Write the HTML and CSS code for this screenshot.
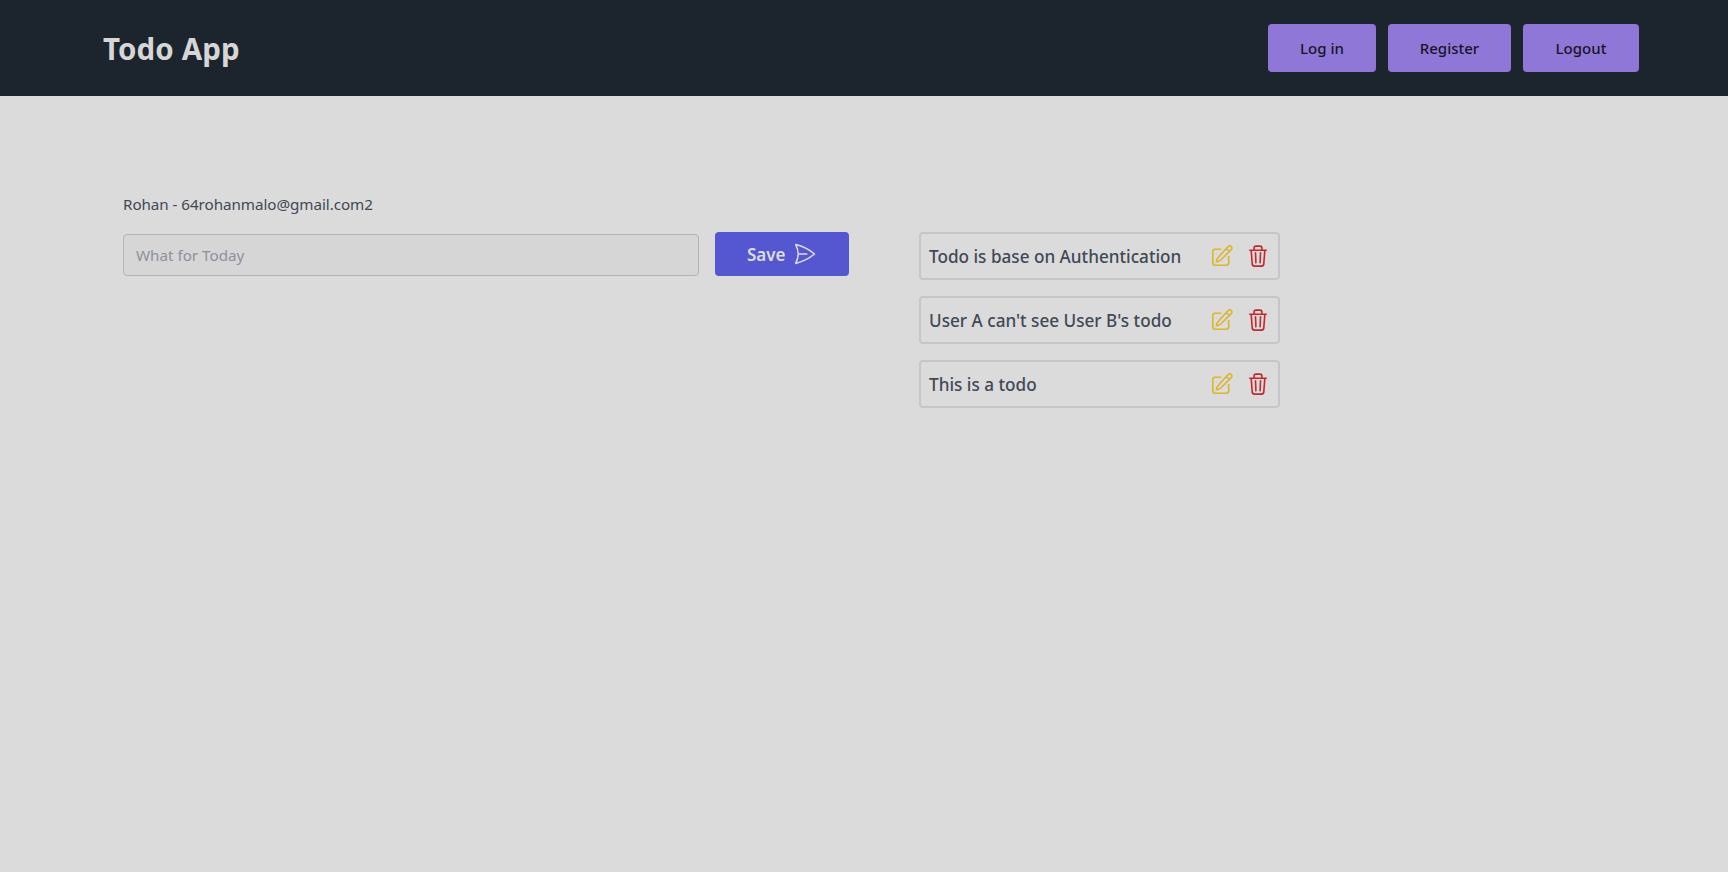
FILE: index.html
```html
<!DOCTYPE html>
<html lang="en">
<head>
<meta charset="utf-8">
<title>Todo App</title>
<link rel="stylesheet" href="styles.css">
</head>
<body>
<svg width="0" height="0" class="sprite" aria-hidden="true">
  <symbol id="edit" viewBox="0 0 22 22">
    <path d="M9.500 4.300H4.200a2.400 2.400 0 0 0-2.400 2.400v11.100a2.400 2.400 0 0 0 2.400 2.400h11.100a2.400 2.400 0 0 0 2.400-2.400V11.500"/>
    <path d="M16.900 1.800c1-1 2.300-1.200 3.300-.2s.8 2.300-.2 3.300L10 14.700c-1.200 1.200-2.500 1.700-4.600 2.100.3-2.100.9-3.500 2-4.600zM15.300 3.500l3 3"/>
  </symbol>
  <symbol id="trash" viewBox="0 0 18 22">
    <path d="M.8 5.200h16.400M2.200 5.400l1 13.500c.1 1.500.9 2.200 2.300 2.200h7c1.400 0 2.200-.7 2.300-2.200l1-13.500M5.100 5V3c0-1.200.7-1.900 1.900-1.900h4c1.200 0 1.900.7 1.900 1.900v2M6.500 7.800l.4 10M11.500 7.800l-.4 10"/>
  </symbol>
  <symbol id="send" viewBox="0 0 22 22">
    <path d="M1.700 1.600C8.800 3.300 15 6.400 20.500 11 15 15.600 8.800 18.700 1.700 20.400 3.500 16.800 4.200 14.300 4.200 11S3.500 5.200 1.700 1.600zM4.200 11h8.600"/>
  </symbol>
</svg>
<header class="header">
  <h1 class="brand">Todo App</h1>
  <nav class="nav">
    <button class="nav-button login">Log in</button>
    <button class="nav-button register">Register</button>
    <button class="nav-button logout">Logout</button>
  </nav>
</header>
<main class="main">
  <section class="composer">
    <p class="user">Rohan - 64rohanmalo@gmail.com2</p>
    <form class="form">
      <input class="field" type="text" placeholder="What for Today">
      <button class="save" type="button"><span class="save-label">Save</span><svg class="send-icon"><use href="#send"/></svg></button>
    </form>
  </section>
  <ul class="todos">
    <li class="todo"><span class="todo-text">Todo is base on Authentication</span><svg class="edit-icon"><use href="#edit"/></svg><svg class="trash-icon"><use href="#trash"/></svg></li>
    <li class="todo"><span class="todo-text">User A can't see User B's todo</span><svg class="edit-icon"><use href="#edit"/></svg><svg class="trash-icon"><use href="#trash"/></svg></li>
    <li class="todo"><span class="todo-text">This is a todo</span><svg class="edit-icon"><use href="#edit"/></svg><svg class="trash-icon"><use href="#trash"/></svg></li>
  </ul>
</main>
</body>
</html>
```
FILE: styles.css
```css
* { box-sizing: border-box; }
body {
  margin: 0;
  min-height: 100vh;
  background: #dbdbdb;
  color: #414954;
  font-family: "Segoe UI", "Noto Sans", "Open Sans", sans-serif;
  font-size: 15.2px;
  line-height: 24px;
}
.sprite { display: block; position: absolute; }
button, input { font: inherit; margin: 0; }
.header {
  display: flex;
  align-items: center;
  justify-content: space-between;
  height: 96px;
  padding: 0 89px 0 103px;
  background: #1c242e;
}
.brand { margin: 0; padding-top: 2px; color: #d6d6d6; font-size: 29.5px; font-weight: 700; line-height: 36px; letter-spacing: 0.1px; }
.nav { display: flex; gap: 12px; }
.nav-button {
  height: 48px;
  padding: 0;
  border: 0;
  border-radius: 4px;
  background: #8f77d7;
  color: #171527;
  font-size: 15px;
  font-weight: 500;
}
.login { width: 108px; }
.register { width: 123px; }
.logout { width: 116px; }
.main { display: flex; padding: 96px 123px 0; }
.composer { width: 726px; }
.user { margin: 0 0 16px; letter-spacing: -0.05px; }
.form { display: flex; align-items: flex-end; gap: 16px; height: 44px; margin: 0; }
.field {
  width: 576px;
  height: 42px;
  padding: 0 12px;
  border: 1px solid #b2b3ba;
  border-radius: 4px;
  background: #d6d6d6;
}
.field::placeholder { color: #8d919b; opacity: 1; }
.save {
  display: flex;
  align-items: center;
  width: 134px;
  height: 44px;
  padding: 0 32px;
  gap: 8px;
  border: 0;
  border-radius: 4px;
  background: #5557d1;
  color: #dcdcdf;
  font-size: 17px;
  font-weight: 600;
}
.save-label { padding-top: 1px; }
.send-icon { flex: none; width: 22px; height: 22px; fill: none; stroke: currentColor; stroke-width: 1.5; stroke-linejoin: round; stroke-linecap: round; }
.todos { display: grid; gap: 16px; width: 361px; margin: 40px 0 0 70px; padding: 0; list-style: none; }
.todo {
  display: flex;
  align-items: center;
  height: 48px;
  padding: 0 11px 0 8px;
  border: 2px solid #c5c6cb;
  border-radius: 4px;
}
.todo-text { margin-right: auto; padding-top: 1px; font-size: 17.15px; font-weight: 500; line-height: 28px; white-space: nowrap; }
.edit-icon { width: 22px; height: 22px; margin-right: 16px; fill: none; stroke: #dbb62b; stroke-width: 1.6; stroke-linecap: round; stroke-linejoin: round; }
.trash-icon { width: 18px; height: 22px; fill: none; stroke: #c5282a; stroke-width: 1.6; stroke-linecap: round; stroke-linejoin: round; }
```
